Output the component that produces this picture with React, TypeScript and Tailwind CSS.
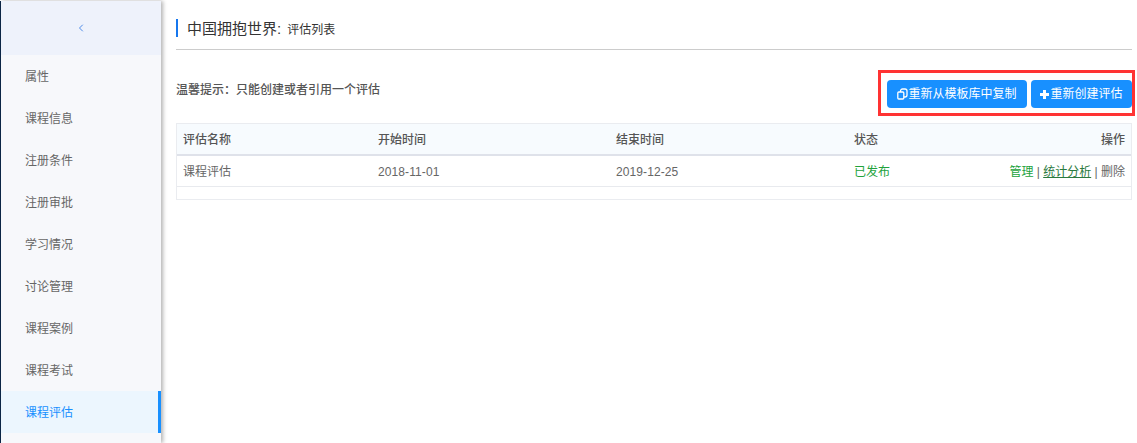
import { ChevronLeft } from "lucide-react";

const items = ["属性", "课程信息", "注册条件", "注册审批", "学习情况", "讨论管理", "课程案例", "课程考试", "课程评估"];
const font = { fontFamily: '"Liberation Sans", "Noto Sans CJK SC", sans-serif' };

export default function App() {
  return (
    <div style={font} className="flex h-[443px] w-[1137px] overflow-hidden bg-white pt-px">
      <aside className="flex h-full w-[161px] shrink-0 flex-col border-l border-l-[#0b2545] bg-[#f7f8fb] shadow-[2px_0_4px_rgba(0,0,0,0.3)]">
        <div className="flex h-[54px] items-center justify-center bg-[#eef2fb] text-[#4f8ce8]">
          <ChevronLeft size={12} strokeWidth={2} />
        </div>
        {items.map((t) => {
          const active = t === "课程评估";
          return (
            <div
              key={t}
              className={
                active
                  ? "flex h-[42px] items-center border-r-[3px] border-r-[#1890ff] bg-[#ecf6fe] pl-6 pt-[2px] text-xs text-[#1890ff]"
                  : "flex h-[42px] items-center pl-6 pt-[2px] text-xs text-[#666666]"
              }
            >
              {t}
            </div>
          );
        })}
      </aside>
      <main className="flex min-w-0 flex-1 flex-col pl-[15px] pr-[5px] pt-[18px]">
        <div className="flex h-[31px] items-start border-b border-b-[#cccccc]">
          <div className="flex h-[18px] items-center border-l-2 border-l-[#1677ee] pl-[9px] pt-[3px] text-[#333333]">
            <span className="text-[15px]">中国拥抱世界:</span>
            <span className="ml-[6px] text-xs">评估列表</span>
          </div>
        </div>
        <div className="flex h-[73px] items-start justify-between">
          <p className="mt-[32px] text-xs font-medium text-[#555555]">温馨提示：只能创建或者引用一个评估</p>
          <div className="relative mt-[30px] flex gap-[4px]">
            <button className="flex h-[28px] w-[140px] items-center justify-center rounded-[4px] bg-[#1890ff] text-xs text-white">
              <svg width="11" height="12" viewBox="0 0 11 12" fill="none" stroke="white" strokeWidth="1.3">
                <rect x="3.5" y="1" width="6.5" height="8" rx="2" />
                <rect x="0.8" y="4" width="6" height="7" rx="1" fill="#1890ff" />
              </svg>
              重新从模板库中复制
            </button>
            <button className="flex h-[28px] w-[101px] items-center justify-center rounded-[4px] bg-[#1890ff] text-xs text-white">
              <svg width="9" height="9" viewBox="0 0 9 9" fill="white" className="mr-px">
                <rect x="3" y="0" width="3" height="9" />
                <rect x="0" y="3" width="9" height="3" />
              </svg>
              重新创建评估
            </button>
            <div className="pointer-events-none absolute -bottom-2 -left-[9px] -right-[3px] -top-[10px] border-[3px] border-[#ff3333]" />
          </div>
        </div>
        <div className="border border-[#eaecf0] text-xs">
          <div className="flex h-[32px] items-center border-b-2 border-b-[#dfe2ea] bg-[#f7fbfe] px-[6px] pt-px font-medium text-[#555555]">
            <span className="w-[195px]">评估名称</span>
            <span className="w-[238px]">开始时间</span>
            <span className="w-[238px]">结束时间</span>
            <span className="flex-1">状态</span>
            <span>操作</span>
          </div>
          <div className="flex h-[31px] items-center border-b border-b-[#e8eaee] px-[6px] pt-[2px] text-[#666666]">
            <span className="w-[195px]">课程评估</span>
            <span className="w-[238px] tracking-[0.1px]">2018-11-01</span>
            <span className="w-[238px] tracking-[0.1px]">2019-12-25</span>
            <span className="flex-1 text-[#22a23c]">已发布</span>
            <span>
              <span className="text-[#22a23c]">管理</span> | <span className="text-[#2b7a3e] underline">统计分析</span> | 删除
            </span>
          </div>
          <div className="h-3" />
        </div>
      </main>
    </div>
  );
}
